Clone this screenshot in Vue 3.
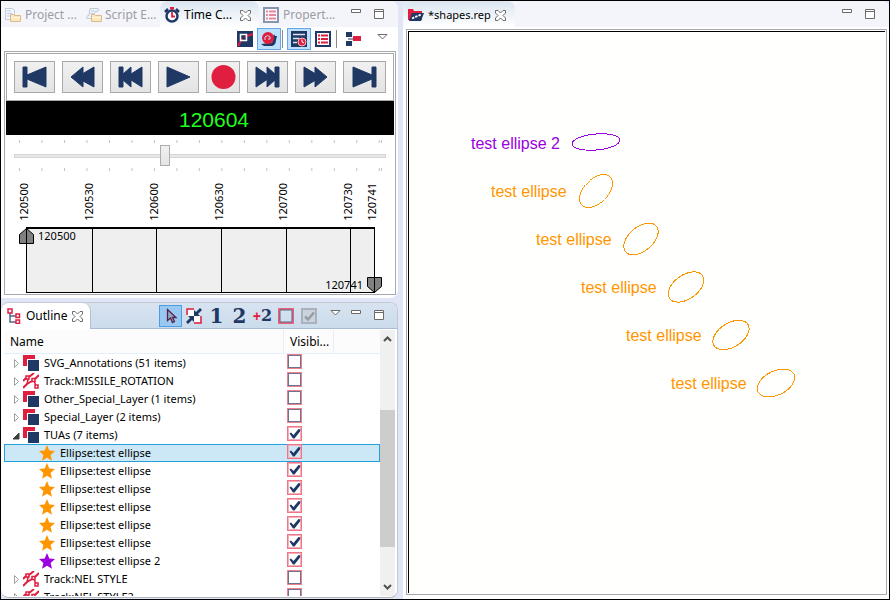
<script setup>
import { ref } from 'vue'

const transport = [
  { id: 'start', label: 'Jump to start', shape: 'M8 6h4v8l19-8v20l-19-8v8H8z' },
  { id: 'rewind', label: 'Fast rewind', shape: 'M8 16L20 6v6.500L31 6v20L20 20v6z' },
  { id: 'back', label: 'Step back', shape: 'M8 6h4v7l8-7v7l11-7v20l-11-7v7l-8-7v7H8z' },
  { id: 'play', label: 'Play', shape: 'M8 6L31 16L8 26z' },
  { id: 'record', label: 'Record', shape: '' },
  { id: 'forward', label: 'Step forward', shape: 'M8 6l11 7.500V6l8 7V6h4v20h-4v-7l-8 7v-7.500L8 26z' },
  { id: 'fast', label: 'Fast forward', shape: 'M8 6l11 6.500V6L31 16L19 26v-6.500L8 26z' },
  { id: 'end', label: 'Jump to end', shape: 'M8 6l19 8V6h4v20h-4v-8L8 26z' },
]

const duration = 161
const now = ref(65)
const ticks = [...Array(17).keys()].map((n) => n * 10).concat(duration)
const stamps = ['120500', '120530', '120600', '120630', '120700', '120730', '120741']

const rows = ref([
  { name: 'SVG_Annotations (51 items)', icon: 'layer', shown: false },
  { name: 'Track:MISSILE_ROTATION', icon: 'track', shown: false },
  { name: 'Other_Special_Layer (1 items)', icon: 'layer', shown: false },
  { name: 'Special_Layer (2 items)', icon: 'layer', shown: false },
  { name: 'TUAs (7 items)', icon: 'layer', shown: true, open: true },
  { name: 'Ellipse:test ellipse', child: 'orange', shown: true, selected: true },
  { name: 'Ellipse:test ellipse', child: 'orange', shown: true },
  { name: 'Ellipse:test ellipse', child: 'orange', shown: true },
  { name: 'Ellipse:test ellipse', child: 'orange', shown: true },
  { name: 'Ellipse:test ellipse', child: 'orange', shown: true },
  { name: 'Ellipse:test ellipse', child: 'orange', shown: true },
  { name: 'Ellipse:test ellipse 2', child: 'purple', shown: true },
  { name: 'Track:NEL STYLE', icon: 'track', shown: false },
  { name: 'Track:NEL STYLE2', icon: 'track', shown: false },
])

const shapes = [
  { text: 'test ellipse 2', tx: 62, ty: 117, cx: 187, cy: 110, rx: 24, ry: 8, turn: -5, tone: 'purple' },
  { text: 'test ellipse', tx: 82, ty: 165, cx: 187, cy: 159, rx: 20, ry: 12, turn: -45, tone: 'orange' },
  { text: 'test ellipse', tx: 127, ty: 213, cx: 232, cy: 207, rx: 20, ry: 12, turn: -40, tone: 'orange' },
  { text: 'test ellipse', tx: 172, ty: 261, cx: 277, cy: 255, rx: 20, ry: 12, turn: -35, tone: 'orange' },
  { text: 'test ellipse', tx: 217, ty: 309, cx: 322, cy: 303, rx: 20, ry: 12, turn: -32, tone: 'orange' },
  { text: 'test ellipse', tx: 262, ty: 357, cx: 367, cy: 351, rx: 20, ry: 12, turn: -26, tone: 'orange' },
]
</script>

<template>
  <svg class="defs" aria-hidden="true">
    <symbol id="close" viewBox="0 0 11 11">
      <path d="M.5.5h2.500L5.500 3 8 .5h2.500V3L8 5.500 10.500 8v2.500H8L5.500 8 3 10.500H.5V8L3 5.500.5 3z" fill="#fff" stroke="#6b6b6b" />
    </symbol>
    <symbol id="min" viewBox="0 0 11 11"><path d="M.5.5h9v3h-9z" fill="#fff" stroke="#6b6b6b" /></symbol>
    <symbol id="max" viewBox="0 0 11 11"><path d="M.5.5h9v9h-9zM.5 2.500h9" fill="#fff" stroke="#6b6b6b" /></symbol>
    <symbol id="drop" viewBox="0 0 11 6"><path d="M1 .5h9L5.500 5z" fill="#fff" stroke="#6b6b6b" /></symbol>
    <symbol id="folder" viewBox="0 0 16 16">
      <path d="M5.500 7.500h3l1 1h6v6h-10z" fill="#fde8bd" stroke="#dcb98b" />
      <path d="M6 10.500h9" stroke="#fff6dc" />
    </symbol>
    <symbol id="layer" viewBox="0 0 16 16">
      <path d="M0 0h12v4H4v7H0z" fill="#e01e3f" /><path d="M5 5h11v11H5z" fill="#1f3864" />
    </symbol>
    <symbol id="track" viewBox="0 0 16 16">
      <g fill="none" stroke="#e01e3f" stroke-width="1.500">
        <path d="M0 8l3-3M6 4l5-4M0 15l4-4 5-3M12 6l4-4" stroke-width="2" />
        <path d="M3 3h3v3H3zM9 5.500h3v3H9zM12 12h3v3h-3zM5 6.500L4 11M11.500 9l1 3" />
      </g>
    </symbol>
    <symbol id="star" viewBox="0 0 16 16"><path d="M8 0l2.300 5.500 5.700.5-4.400 3.900L13 15.800 8 12.700 3 15.800l1.400-5.900L0 6l5.700-.5z" fill="currentColor" /></symbol>
    <symbol id="list" viewBox="0 0 16 16">
      <path d="M1 1h14v14H1z" fill="#fff" stroke="#1f3864" stroke-width="2" />
      <path d="M3 4.500h2M3 8h2M3 11.500h2M6 4.500h7M6 8h7M6 11.500h7" stroke="#e01e3f" stroke-width="2" />
    </symbol>
    <symbol id="tick" viewBox="0 0 15 15"><path d="M2.500 7.500l1.500-1 2.500 2.500 5-6 2 .5-.5 2-5.500 7H6z" fill="currentColor" /></symbol>
  </svg>

  <main class="workbench">
    <div class="left">
      <section class="pane timer">
        <nav class="tabs">
          <a class="tab first" href="#project">
            <svg class="i16" viewBox="0 0 16 16">
              <path d="M.5 1.500h7l2 2v9h-9z" fill="#f4f8fd" stroke="#c3cbd8" /><path d="M2 4h4M2 6.500h5M2 9h3" stroke="#b7cde8" />
              <use href="#folder" />
            </svg>Project ...
          </a>
          <a class="tab second" href="#script">
            <svg class="i16" viewBox="0 0 16 16">
              <path d="M4 1.500h8q2 2-1 3H9L7 11.500H1q-1.500-2 1-3h1z" fill="#edf3fa" stroke="#c0c8d4" /><path d="M5 4h3M4.500 6.500h3" stroke="#b7cde8" />
              <use href="#folder" />
            </svg>Script E...
          </a>
          <a class="tab active" href="#time">
            <svg class="i16" viewBox="0 0 16 16">
              <circle cx="8" cy="9" r="5.500" fill="#fff" stroke="#1f3864" stroke-width="2.500" />
              <path d="M6 1h4M8 1v2M8 5v4.500h3" fill="none" stroke="#e01e3f" stroke-width="1.800" />
              <path d="M1 5l3-3M15 5l-3-3" stroke="#1f3864" stroke-width="2.500" />
            </svg>Time C...
            <svg class="i11 x"><use href="#close" /></svg>
          </a>
          <a class="tab last" href="#props"><svg class="i16 faint"><use href="#list" /></svg>Propert...</a>
          <span class="winctl">
            <button class="c-min" aria-label="Minimize"><svg class="i11"><use href="#min" /></svg></button>
            <button class="c-max" aria-label="Maximize"><svg class="i11"><use href="#max" /></svg></button>
          </span>
        </nav>

        <div class="toolbar">
          <button class="tool" aria-label="Plot region">
            <svg class="i16" viewBox="0 0 16 16">
              <path d="M0 0h16v16H0z" fill="#1f3864" /><path d="M1 15L5 8l5-3 6-2" fill="none" stroke="#e01e3f" stroke-width="2" />
              <path d="M3.500 3.500h6v6h-6z" fill="none" stroke="#fff" stroke-width="1.500" /><path d="M5 5h3v3H5z" fill="#1f3864" />
            </svg>
          </button>
          <button class="tool on" aria-label="Snail trail">
            <svg class="i16" viewBox="0 0 16 16">
              <path d="M0 13q6-1 11-1 1-3 1-6l1-3 1 2h2l-1 4q0 5-4 6H3z" fill="#1f3864" />
              <circle cx="7" cy="7" r="5" fill="#e01e3f" stroke="#e01e3f" stroke-width="2" />
              <path d="M4 9V6q3-3 5 0 1 3-2 2" fill="none" stroke="#bfe0fc" />
            </svg>
          </button>
          <i class="sep"></i>
          <button class="tool on" aria-label="Time display">
            <svg class="i16" viewBox="0 0 16 16">
              <path d="M0 0h16v16H0z" fill="#1f3864" /><path d="M2 3.500h12M2 7.500h6M2 11.500h4" stroke="#d8e2f0" stroke-width="1.500" />
              <circle cx="11" cy="11" r="4" fill="#e01e3f" stroke="#fbb" /><path d="M11 8.500V11l2 1" fill="none" stroke="#fff" />
            </svg>
          </button>
          <button class="tool" aria-label="Properties"><svg class="i16"><use href="#list" /></svg></button>
          <i class="sep"></i>
          <button class="tool" aria-label="Layout">
            <svg class="i16" viewBox="0 0 16 16">
              <path d="M1 1h6v5H1zM1 10h6v5H1z" fill="#1f3864" /><path d="M3 7h6v2H3z" fill="#8a9ab5" /><path d="M8 5h8v5H8z" fill="#e01e3f" />
            </svg>
          </button>
          <button class="tool menu" aria-label="View menu"><svg class="drop"><use href="#drop" /></svg></button>
        </div>

        <div class="stage">
          <div class="transport">
            <button v-for="b in transport" :key="b.id" :class="b.id" :aria-label="b.label">
              <svg v-if="b.shape" viewBox="0 0 39 32"><path :d="b.shape" fill="#1f3864" stroke="#1f3864" stroke-linejoin="round" /></svg>
              <svg v-else viewBox="0 0 39 32"><circle cx="19.500" cy="16" r="12" fill="#e01e3f" /></svg>
            </button>
          </div>
          <output class="readout" for="time">120604</output>
          <div class="slider">
            <svg class="ticks"><rect v-for="t in ticks" :key="t" :x="(t / duration) * 100 + '%'" width="1" height="3" /></svg>
            <input id="time" v-model="now" type="range" min="0" :max="duration" aria-label="Current time" />
            <svg class="ticks"><rect v-for="t in ticks" :key="t" :x="(t / duration) * 100 + '%'" width="1" height="3" /></svg>
          </div>
          <div class="scale stamps"><span v-for="s in stamps" :key="s">{{ s }}</span></div>
          <div class="scale ruler">
            <i v-for="n in 6" :key="n"></i>
            <span class="mark from">
              <svg viewBox="0 0 15 16"><path d="M.5 15.500v-9l7-6 7 6v9zM7.500 0v16" fill="#808080" stroke="#000" /></svg>120500
            </span>
            <span class="mark to">
              120741<svg viewBox="0 0 15 16"><path d="M.5.5h14v9l-7 6-7-6zM7.500 0v16" fill="#808080" stroke="#000" /></svg>
            </span>
          </div>
        </div>
      </section>

      <section class="pane outline">
        <header class="obar">
          <a class="otab" href="#outline">
            <svg class="i16" viewBox="0 0 16 16">
              <g fill="none" stroke-width="1.500"><path d="M3 5v9h6M3 8h6" stroke="#52688c" /><path d="M1 1h4v4H1zM9 6h3.500v3.500H9zM9 12h3.500v3.500H9z" stroke="#e01e3f" /></g>
            </svg>Outline
            <svg class="i11 x"><use href="#close" /></svg>
          </a>
          <div class="otools">
            <button class="on" aria-label="Select">
              <svg class="i16" viewBox="0 0 16 16"><path d="M4.500 1.500v11l3-2.500 2 4.500 2-1-2-4h3.500z" fill="#8fa8cc" stroke="#5a2147" stroke-width="1.300" /></svg>
            </button>
            <button aria-label="Fit to window">
              <svg class="i16" viewBox="0 0 16 16">
                <path d="M1 7V1h7M15 8v7H8" fill="none" stroke="#e01e3f" stroke-width="1.500" />
                <path d="M2 2h6v6H2zM8 8h6v6H8z" fill="#fff" />
                <path d="M8 8V2l2 2 4-4 2 2-4 4 2 2zM8 8v6l-2-2-4 4-2-2 4-4-2-2z" fill="#1f3864" />
              </svg>
            </button>
            <button class="num">1</button>
            <button class="num">2</button>
            <button class="num plus"><b>+</b>2</button>
            <button aria-label="Hide"><svg class="i16" viewBox="0 0 16 16"><path d="M1 1h14v14H1z" fill="none" stroke="#ea6179" stroke-width="2" /><path d="M2 2h12v12H2z" fill="none" stroke="#52688c" /></svg></button>
            <button class="off" aria-label="Reveal"><svg class="i16" viewBox="0 0 16 16"><path d="M1 1h14v14H1z" fill="#c9d3de" stroke="#aab1ba" stroke-width="2" /><path d="M4 8.500L7 11.500 13 4.500" fill="none" stroke="#979ca2" stroke-width="2.500" /></svg></button>
          </div>
          <button class="c-menu" aria-label="View menu"><svg class="drop"><use href="#drop" /></svg></button>
          <span class="winctl">
            <button class="c-min" aria-label="Minimize"><svg class="i11"><use href="#min" /></svg></button>
            <button class="c-max" aria-label="Maximize"><svg class="i11"><use href="#max" /></svg></button>
          </span>
        </header>

        <div class="tree">
          <div class="view">
            <table>
              <colgroup><col /><col class="c-vis" /><col class="c-rest" /></colgroup>
              <thead><tr><th>Name</th><th>Visibi...</th><th></th></tr></thead>
              <tbody>
                <tr v-for="(r, n) in rows" :key="n" :class="{ selected: r.selected }">
                  <td>
                    <div class="item" :class="{ child: r.child }">
                      <svg v-if="!r.child" class="twist" viewBox="0 0 8 9">
                        <path v-if="r.open" d="M7 2v6H1z" fill="#404040" stroke="#404040" />
                        <path v-else d="M2.500.5v8l4-4z" fill="#fff" stroke="#a0a0a0" />
                      </svg>
                      <svg class="i16" :class="r.child"><use :href="r.child ? '#star' : '#' + r.icon" /></svg>
                      <label :for="'row' + n">{{ r.name }}</label>
                    </div>
                  </td>
                  <td colspan="2">
                    <span class="check">
                      <input :id="'row' + n" v-model="r.shown" type="checkbox" />
                      <svg v-if="r.shown"><use href="#tick" /></svg>
                    </span>
                  </td>
                </tr>
              </tbody>
            </table>
          </div>
          <div class="scroll">
            <svg viewBox="0 0 15 16"><path d="M4 10l3.500-3.500L11 10" /></svg>
            <i class="above"></i><i class="thumb"></i><i class="below"></i>
            <svg viewBox="0 0 15 16"><path d="M4 6l3.500 3.500L11 6" /></svg>
          </div>
        </div>
      </section>
    </div>

    <section class="pane editor">
      <nav class="tabs">
        <a class="tab active file" href="#shapes">
          <svg class="i16" viewBox="0 0 16 16">
            <path d="M0 2h5l1 2h8v9H0z" fill="#e01e3f" /><path d="M4 6h12l-3 8H1z" fill="#1f3864" />
            <path d="M4 11.500l3-1.500 3-1 3-1.500" stroke="#fff" stroke-width="1.800" stroke-dasharray="2.500 1" fill="none" />
          </svg>*shapes.rep
          <svg class="i11 x"><use href="#close" /></svg>
        </a>
        <span class="winctl">
          <button class="c-min" aria-label="Minimize"><svg class="i11"><use href="#min" /></svg></button>
          <button class="c-max" aria-label="Maximize"><svg class="i11"><use href="#max" /></svg></button>
        </span>
      </nav>
      <div class="frame">
        <svg class="plot">
          <g v-for="(s, n) in shapes" :key="n" :class="s.tone">
            <text :x="s.tx" :y="s.ty">{{ s.text }}</text>
            <ellipse :cx="s.cx" :cy="s.cy" :rx="s.rx" :ry="s.ry" :transform="`rotate(${s.turn} ${s.cx} ${s.cy})`" />
          </g>
        </svg>
      </div>
    </section>
  </main>
</template>

<style>
body { margin: 0; }
</style>

<style scoped>
* { box-sizing: border-box; }
.defs { position: absolute; width: 0; height: 0; }
.workbench {
  display: grid;
  grid-template-columns: minmax(0, 397fr) minmax(0, 486fr);
  gap: 5px;
  height: 100vh;
  border: 1px solid #000;
  background: #e1e6f6;
  color: #000;
  font: 11px/18px "Noto Sans", "Open Sans", sans-serif;
}
button { display: flex; align-items: center; justify-content: center; padding: 0; border: 0; background: none; color: inherit; font: inherit; }
a { color: inherit; text-decoration: none; }
svg { display: block; flex: none; }
.i16 { width: 16px; height: 16px; }
.i11 { width: 11px; height: 11px; }
.drop { width: 11px; height: 6px; }
.faint { opacity: .5; }
.orange { color: #ff9600; }
.purple { color: #9a00e0; }

.left { display: flex; flex-direction: column; gap: 4px; min-width: 0; min-height: 0; }
.pane { display: flex; flex-direction: column; background: #fff; min-width: 0; min-height: 0; }
.timer { flex: none; border-radius: 0 8px 8px 0; overflow: hidden; }

.tabs { display: flex; height: 26px; background: #f4f5fb; }
.tab { display: flex; align-items: center; gap: 4px; padding: 2px 4px 0; color: #9c9ca2; white-space: nowrap; overflow: hidden; font-size: 12px; }
.tab.first { width: 80px; }
.tab.second { width: 79px; padding-left: 5px; gap: 3px; }
.tab.active { width: 99px; color: #000; background: linear-gradient(#dae5f0, #fff); border-radius: 8px 8px 0 0; }
.tab.active.file { width: 112px; padding-left: 5px; padding-right: 8px; font-size: 11px; }
.tab.last { padding-left: 4px; }
.x { margin-left: auto; margin-right: 4px; }
.winctl { display: flex; margin-left: auto; padding: 8px 7px 0 0; }
.winctl button { align-items: flex-start; height: 11px; }
.c-min { width: 22px; }
.c-max { width: 24px; }
.c-menu { width: 20px; }

.toolbar { display: flex; justify-content: flex-end; align-items: center; height: 24px; padding-right: 4px; }
.tool { width: 24px; height: 22px; }
.tool.on, .otools .on { background: #bfe0fc; border: 1px solid #66a8e8; }
.tool.menu { margin-left: 5px; align-items: flex-start; padding-top: 6px; }
.sep { width: 1px; height: 18px; margin: 0 4px 0 1px; background: #8a8a8a; }

.stage { margin: 0 2px 3px 3px; border: 1px solid #a8a8b0; padding: 1px; }
.transport { display: flex; justify-content: space-between; padding: 7px; border: 1px solid #a8a8a8; }
.transport button { width: 41px; height: 32px; border: 1px solid #a9a9a9; background: linear-gradient(#f0f0f0, #e4e4e4); }
.transport svg { width: 39px; height: 32px; }
.transport .record { width: 34px; }
.transport .end { width: 43px; }
.readout { display: flex; align-items: center; justify-content: center; height: 34px; padding: 4px 0 0 28px; background: #000; color: #20ff20; font: 21px/24px "Liberation Sans", Arial, sans-serif; }
.slider { display: flex; flex-direction: column; padding: 5px 8px 0; }
.ticks { width: auto; height: 3px; margin: 0 5px; overflow: visible; fill: #c4c4c4; }
.slider input { appearance: none; width: 100%; height: 25px; margin: 0; background: none; }
.slider input::-webkit-slider-runnable-track { height: 4px; border: 1px solid #d6d6d6; background: #e7eaea; }
.slider input::-webkit-slider-thumb { appearance: none; width: 10px; height: 21px; margin-top: -10px; border: 1px solid #acacac; background: linear-gradient(#f0f0f0, #e5e5e5); }

.scale { display: grid; grid-template-columns: repeat(5, minmax(0, 30fr)) minmax(0, 11fr) 0; margin: 0 20px; }
.stamps { align-items: end; height: 50px; margin-bottom: 6px; font-size: 11px; line-height: 14px; }
.stamps span { writing-mode: vertical-rl; transform: rotate(180deg); width: 14px; margin-left: -9px; }
.ruler { position: relative; height: 66px; border: 1px solid #000; border-top-width: 2px; background: #efefef; margin-right: 19px; grid-template-columns: repeat(5, minmax(0, 30fr)) minmax(0, 11fr); }
.ruler i + i { border-left: 1px solid #000; }
.mark { position: absolute; display: flex; font-size: 11px; line-height: 16px; }
.mark svg { width: 15px; height: 16px; }
.mark.from { left: -8px; top: -1px; gap: 4px; }
.mark.to { right: -8px; bottom: -1px; gap: 4px; }

.outline { flex: 1; border: 1px solid #c4c8d2; border-left: 0; border-bottom-color: #b0b4bc; border-radius: 8px; overflow: hidden; margin-bottom: 1px; }
.obar { display: flex; height: 26px; background: linear-gradient(#d8e3f0, #cbdcec); border-bottom: 1px solid #a9bbd0; }
.otab { display: flex; align-items: center; gap: 3px; width: 90px; height: 26px; margin-right: auto; padding: 0 3px 0 6px; background: #fff; border-right: 1px solid #b4c0d0; border-radius: 8px 8px 0 0; font-size: 12px; }
.otools { display: flex; align-items: center; margin-right: 5px; }
.otools button { width: 23px; height: 22px; }
.otools .on { background: #99c9f2; border-color: #4f9ce3; }
.otools .num { color: #1f3864; font: bold 20px/22px "DejaVu Serif", serif; }
.otools .plus { font-size: 16px; }
.plus b { color: #e01e3f; font: bold 14px/20px "Liberation Sans", sans-serif; }
.obar .winctl { margin-left: 0; padding: 7px 6px 0 0; }
.c-menu { align-items: flex-start; padding-top: 7px; }

.tree { flex: 1; display: flex; min-height: 0; margin: 1px 2px 1px 3px; }
.view { flex: 1; min-width: 0; overflow: hidden; }
table { width: 100%; table-layout: fixed; border-collapse: separate; border-spacing: 0; }
.c-vis { width: 50px; }
.c-rest { width: 46px; }
th { height: 24px; padding: 0 6px; text-align: left; font-weight: 400; font-size: 12px; background: #fcfcfc; border-bottom: 1px solid #e5effc; border-right: 1px solid #e5effc; white-space: nowrap; overflow: hidden; }
th:last-child { border-right: 0; }
td { height: 18px; padding: 0 3px; vertical-align: top; }
.selected td { background: #cce8f6; box-shadow: inset 0 1px #26a0da, inset 0 -1px #26a0da; }
.selected td:first-child { box-shadow: inset 0 1px #26a0da, inset 0 -1px #26a0da, inset 1px 0 #26a0da; }
.selected td:last-child { box-shadow: inset 0 1px #26a0da, inset 0 -1px #26a0da, inset -1px 0 #26a0da; }
.item { display: flex; align-items: center; height: 18px; padding-left: 5px; white-space: nowrap; }
.item.child { padding-left: 32px; }
.item label { margin-left: 5px; }
.twist { width: 8px; height: 9px; margin-right: 3px; }
.check { display: grid; width: 15px; height: 15px; }
.check > * { grid-area: 1 / 1; width: 15px; height: 15px; margin: 0; }
.check input { appearance: none; border: 1px solid #f07f90; background: #fff; box-shadow: inset 0 0 0 1px #6b7590; }
.check input:checked { border-color: #ee7488; background: none; box-shadow: inset 0 0 0 1px #f6b0bb; }
.check svg { color: #1f3864; pointer-events: none; }
.scroll { display: flex; flex-direction: column; width: 15px; background: #f0f0f0; }
.scroll svg { width: 15px; height: 18px; fill: none; stroke: #505050; stroke-width: 2; }
.above { flex: 62; }
.thumb { flex: 137; background: #cdcdcd; }
.below { flex: 31; }

.editor { border-radius: 8px 8px 0 0; overflow: hidden; }
.frame { flex: 1; display: flex; min-height: 0; margin: 2px 2px 4px 3px; padding: 1px; border: 1px solid #a8a8b0; }
.plot { flex: 1; width: 100%; min-width: 0; background: #fffffd; border: solid #000; border-width: 1px 0 0 1px; font: 16px "Liberation Sans", Arial, sans-serif; }
.plot text { fill: currentColor; }
.plot ellipse { fill: none; stroke: currentColor; shape-rendering: crispEdges; }
</style>
